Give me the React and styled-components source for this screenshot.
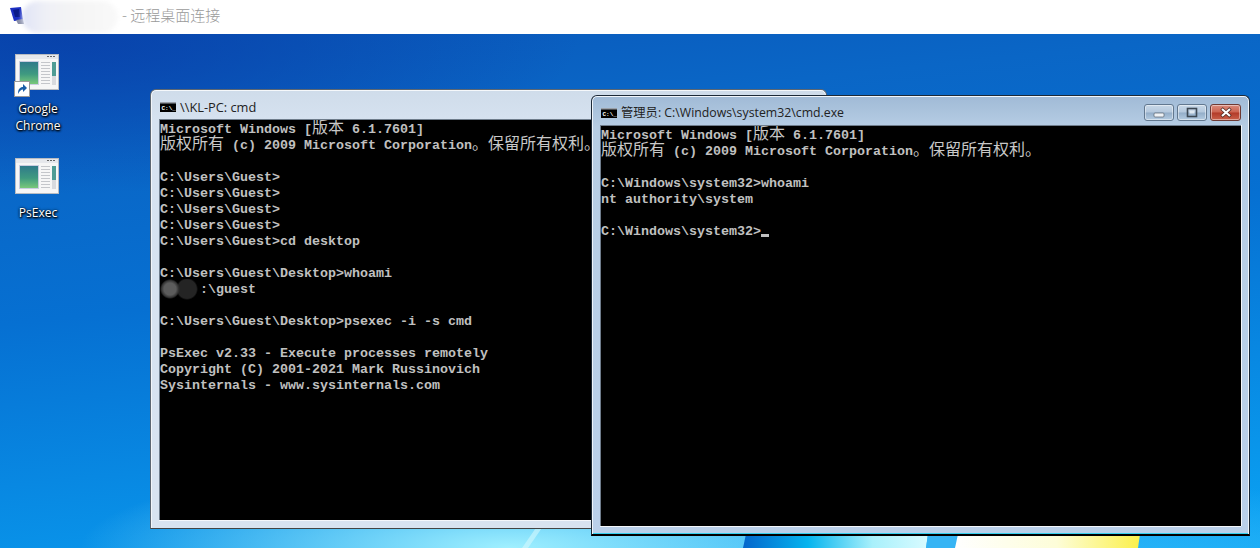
import React from "react";
import styled, { createGlobalStyle } from "styled-components";

const Global = createGlobalStyle`
  html, body { margin: 0; padding: 0; background: #fff; overflow: hidden; }
  #root { width: 1260px; height: 548px; }
`;

const Page = styled.div`
  width: 1260px; height: 548px; display: flex; flex-direction: column;
  font-family: "Open Sans", "Noto Sans", "Noto Sans CJK SC", sans-serif;
`;
const TitleBar = styled.header`
  position: relative; height: 34px; flex: none; background: #fff;
  display: flex; align-items: center; padding-left: 10px; overflow: hidden;
`;
const Smudge = styled.div`
  width: 96px; height: 32px; margin-left: -2px; border-radius: 16px;
  background: linear-gradient(90deg, #e0e4f6 0%, #eff0f6 25%, #f5f5f5 60%, #f9f9f9 100%);
  filter: blur(2px);
`;
const AppTitle = styled.span`
  margin-left: 4px; font-size: 15px; color: #9a9a9a; line-height: 34px; transform: translateY(-2px);
  font-family: "Noto Sans CJK SC", sans-serif; font-weight: 300;
`;
const Desktop = styled.main`
  position: relative; flex: 1; overflow: hidden;
  background:
    radial-gradient(ellipse 430px 90px at 510px 514px, rgba(160,240,255,1), rgba(130,230,255,0) 100%),
    radial-gradient(ellipse 520px 80px at 1000px 524px, rgba(60,190,250,.8), rgba(60,190,250,0) 100%),
    radial-gradient(ellipse 520px 160px at 60px 0px, rgba(8,62,168,.85), rgba(8,62,168,0) 100%),
    linear-gradient(174deg, #0a58ba 0%, #0a66c6 20%, #0670d2 45%, #0888e2 70%, #0aa4f4 100%);
`;
const Flag = styled.svg`
  position: absolute; left: 0; top: 0; width: 1260px; height: 514px;
`;
const IconColumn = styled.div`
  position: relative; width: 76px; display: flex; flex-direction: column; align-items: center;
  padding-top: 20px; gap: 24px;
`;
const IconItem = styled.div`
  position: relative; width: 76px; display: flex; flex-direction: column; align-items: center;
`;
const IconArt = styled.svg`
  width: 44px; height: 36px; display: block; margin: 0 0 10px -2px;
`;
const ShortcutBadge = styled.svg`
  position: absolute; left: 14px; top: 27px; width: 16px; height: 16px;
`;
const IconLabel = styled.div`
  color: #fff; font-size: 12px; line-height: 17px; text-align: center;
  text-shadow: 0 1px 2px #000, 1px 1px 2px #000, 0 0 3px rgba(0,0,0,.8);
`;
const Window = styled.section`
  position: absolute; left: ${p => p.$x}px; top: ${p => p.$y}px;
  width: ${p => p.$w}px; height: ${p => p.$h}px; box-sizing: border-box;
  display: flex; flex-direction: column; padding: 0 8px 8px;
  border-radius: 6px 6px 0 0;
  background: ${p => p.$active
    ? "linear-gradient(180deg, #a0bad6 0%, #b6cde4 7%, #bad0ea 100%)"
    : "linear-gradient(180deg, #cfdcea 0%, #d6e2f0 7%, #d8e3f0 100%)"};
  border: 1px solid ${p => p.$active ? "#1d2a38" : "#5d6772"};
  border-bottom: ${p => p.$active ? "2px solid #000" : "1px solid #444"};
  box-shadow: ${p => p.$active
    ? "inset 0 1px 0 #f2f7fc, inset 1px 0 0 #eef4fa, inset -1px 0 0 #eef4fa, inset 0 -1px 0 #35d0ee"
    : "inset 0 1px 0 #f5f8fb, inset 1px 0 0 #f3f6fa, inset -1px 0 0 #f3f6fa"};
`;
const WinHead = styled.div`
  height: 29px; flex: none; display: flex; align-items: center; gap: 4px; padding-left: 1px;
  padding-top: 4px; box-sizing: border-box; position: relative;
`;
const WinIcon = styled.svg`
  width: 16px; height: 10px; flex: none;
`;
const WinTitle = styled.span`
  font-size: ${p => p.$size}px; color: #222; line-height: 16px; white-space: nowrap;
  font-family: "Open Sans", "Noto Sans CJK SC", sans-serif;
`;
const Controls = styled.div`
  position: absolute; right: 0; top: 8px; display: flex; gap: 3px;
`;
const Ctl = styled.div`
  width: ${p => p.$close ? 31 : 30}px; height: 17px; box-sizing: border-box; border: 1px solid ${p => p.$close ? "#6e3a34" : "#62788f"};
  border-radius: 3px; display: flex; align-items: center; justify-content: center;
  background: ${p => p.$close
    ? "linear-gradient(180deg, #d98b7c 0%, #cc6350 48%, #b23a28 52%, #c9604a 100%)"
    : "linear-gradient(180deg, #c8d8e8 0%, #b4c8dd 48%, #93adc8 52%, #b4cce2 100%)"};
  box-shadow: inset 0 0 0 1px rgba(255,255,255,.45);
`;
const CtlGlyph = styled.svg`width: 14px; height: 11px; display: block;`;
const Console = styled.div`
  flex: 1; background: #000; color: #c0c0c0; overflow: hidden; box-sizing: border-box;
  padding-top: 2px; position: relative;
  border: 0 solid #6f7d8c; border-width: 1px 0 0 1px;
  box-shadow: 0 1px 0 #f4f7fb, 1px 0 0 #f4f7fb;
  font-family: "Liberation Mono", monospace; font-weight: 700; font-size: 13.33px;
`;
const Line = styled.div`
  height: 16px; line-height: 16px; white-space: pre; color: #c0c0c0;
`;
const Cjk = styled.span`
  font-family: "Noto Sans CJK SC", sans-serif; font-weight: 400; font-size: 16px; line-height: 0;
  color: #c8c8c8;
`;
const Cursor = styled.span`
  display: inline-block; width: 8px; height: 3px; background: #c0c0c0; vertical-align: -2px;
`;
const Redact = styled.div`
  position: absolute; left: 0; top: 159px; width: 38px; height: 21px;
  background:
    radial-gradient(circle 10px at 10px 10px, #5c5c5c 0 60%, #333 85%, transparent 100%),
    radial-gradient(circle 11px at 27px 10px, #242424 0 85%, transparent 100%);
`;

const PeArt = () => (
  <IconArt viewBox="0 0 44 36">
    <rect x="0.5" y="0.5" width="43" height="35" fill="#f6f6f6" stroke="#b8bcc2" />
    <rect x="1" y="1" width="42" height="4" fill="#e6e8ec" />
    <rect x="32" y="2" width="2" height="1" fill="#666" /><rect x="35" y="2" width="2" height="1" fill="#666" /><rect x="38" y="2" width="2" height="1" fill="#666" />
    <defs>
      <linearGradient id="pa" x1="0" y1="0" x2="0" y2="1">
        <stop offset="0" stopColor="#2f7a8a" /><stop offset=".55" stopColor="#3f9a80" /><stop offset="1" stopColor="#79c87a" />
      </linearGradient>
    </defs>
    <rect x="4" y="7" width="20" height="24" fill="#c9cde0" />
    <rect x="5" y="8" width="18" height="22" fill="url(#pa)" />
    {[8, 11, 14, 17, 20, 23, 26, 29].map(y => (
      <rect key={y} x="26" y={y} width="9" height="1" fill="#c4c6ca" />
    ))}
    <rect x="37" y="8" width="4" height="14" fill="#4e9c94" />
    <rect x="37" y="22" width="4" height="9" fill="#d8dade" />
  </IconArt>
);
const CmdIcon = () => (
  <WinIcon viewBox="0 0 16 10">
    <rect width="16" height="10" fill="#000" />
    <rect width="16" height="1.5" fill="#9aa0a8" />
    <text x="1.5" y="8" fontFamily="Liberation Mono" fontWeight="700" fontSize="6" fill="#fff">C:\_</text>
  </WinIcon>
);

const L = ({ children }) => <Line>{children === undefined ? " " : children}</Line>;

export default function App() {
  return (
    <Page>
      <Global />
      <TitleBar>
        <svg width="14" height="22" viewBox="0 0 14 22" style={{ flex: "none", marginTop: -4 }}>
          <path d="M0 4 L11 3 L13 16 L4 17 Z" fill="#1c2fc2" />
          <path d="M3 6 L9 5 L10 13 L5 13 Z" fill="#0a1a88" />
          <path d="M6 16 L13 15 L14 20 L8 20 Z" fill="#8a8fa8" />
        </svg>
        <Smudge />
        <AppTitle>- 远程桌面连接</AppTitle>
      </TitleBar>
      <Desktop>
        <Flag viewBox="0 0 1260 514">
          <defs>
            <linearGradient id="f1" x1="0" y1="0" x2="1" y2="0">
              <stop offset="0" stopColor="#0466cc" /><stop offset=".35" stopColor="#05b4ee" /><stop offset=".7" stopColor="#a8f0fb" /><stop offset="1" stopColor="#d8fbff" />
            </linearGradient>
            <linearGradient id="f2" x1="0" y1="0" x2="1" y2="0">
              <stop offset="0" stopColor="#ffffff" /><stop offset=".55" stopColor="#fdfdd8" /><stop offset="1" stopColor="#fbf04a" />
            </linearGradient>
          </defs>
          <path d="M746 500 L928 500 L926 514 L743 514 Z" fill="url(#f1)" />
          <path d="M928 500 L958 500 L955 514 L926 514 Z" fill="#36b4f4" />
          <path d="M958 500 L1140 500 L1138 514 L955 514 Z" fill="url(#f2)" />
          <path d="M540 488 L546 488 L528 514 L522 514 Z" fill="#d4f8fe" opacity=".6" />
        </Flag>
        <IconColumn>
          <IconItem>
            <PeArt />
            <ShortcutBadge viewBox="0 0 16 16">
              <rect x=".5" y=".5" width="15" height="15" fill="#fff" stroke="#9a9a9a" />
              <path d="M4 13 C4 8 6 6 9 6 L9 3 L13 7 L9 11 L9 8.5 C7 8.5 5.5 10 4 13 Z" fill="#1a5ea8" />
            </ShortcutBadge>
            <IconLabel>Google<br />Chrome</IconLabel>
          </IconItem>
          <IconItem>
            <PeArt />
            <IconLabel>PsExec</IconLabel>
          </IconItem>
        </IconColumn>

        <Window $x={150} $y={55} $w={677} $h={440}>
          <WinHead>
            <CmdIcon />
            <WinTitle $size={12.8}>\\KL-PC: cmd</WinTitle>
          </WinHead>
          <Console>
            <L>Microsoft Windows [<Cjk>版本</Cjk> 6.1.7601]</L>
            <L><Cjk>版权所有</Cjk> (c) 2009 Microsoft Corporation<Cjk>。保留所有权利。</Cjk></L>
            <L />
            <L>{"C:\\Users\\Guest>"}</L>
            <L>{"C:\\Users\\Guest>"}</L>
            <L>{"C:\\Users\\Guest>"}</L>
            <L>{"C:\\Users\\Guest>"}</L>
            <L>{"C:\\Users\\Guest>cd desktop"}</L>
            <L />
            <L>{"C:\\Users\\Guest\\Desktop>whoami"}</L>
            <L>{"     :\\guest"}</L>
            <L />
            <L>{"C:\\Users\\Guest\\Desktop>psexec -i -s cmd"}</L>
            <L />
            <L>PsExec v2.33 - Execute processes remotely</L>
            <L>Copyright (C) 2001-2021 Mark Russinovich</L>
            <L>Sysinternals - www.sysinternals.com</L>
            <Redact />
          </Console>
        </Window>

        <Window $x={591} $y={61} $w={659} $h={441} $active>
          <WinHead>
            <CmdIcon />
            <WinTitle $size={12.3}>管理员: C:\Windows\system32\cmd.exe</WinTitle>
            <Controls>
              <Ctl>
                <CtlGlyph viewBox="0 0 14 11"><rect x="2" y="6" width="10" height="4" rx="1" fill="#eef2f6" stroke="#55606c" strokeWidth=".7" /></CtlGlyph>
              </Ctl>
              <Ctl>
                <CtlGlyph viewBox="0 0 14 11"><rect x="2.5" y="1.5" width="9" height="8" fill="none" stroke="#3c4854" strokeWidth="1.6" /><rect x="4.5" y="3.5" width="5" height="3" fill="#dfe8f0" /></CtlGlyph>
              </Ctl>
              <Ctl $close>
                <CtlGlyph viewBox="0 0 14 11"><path d="M2.5 1.5 L11.5 9.5 M11.5 1.5 L2.5 9.5" stroke="#4a2620" strokeWidth="3.6" /><path d="M3 2 L11 9 M11 2 L3 9" stroke="#fff" strokeWidth="2.2" /></CtlGlyph>
              </Ctl>
            </Controls>
          </WinHead>
          <Console>
            <L>Microsoft Windows [<Cjk>版本</Cjk> 6.1.7601]</L>
            <L><Cjk>版权所有</Cjk> (c) 2009 Microsoft Corporation<Cjk>。保留所有权利。</Cjk></L>
            <L />
            <L>{"C:\\Windows\\system32>whoami"}</L>
            <L>nt authority\system</L>
            <L />
            <L>{"C:\\Windows\\system32>"}<Cursor /></L>
          </Console>
        </Window>
      </Desktop>
    </Page>
  );
}
